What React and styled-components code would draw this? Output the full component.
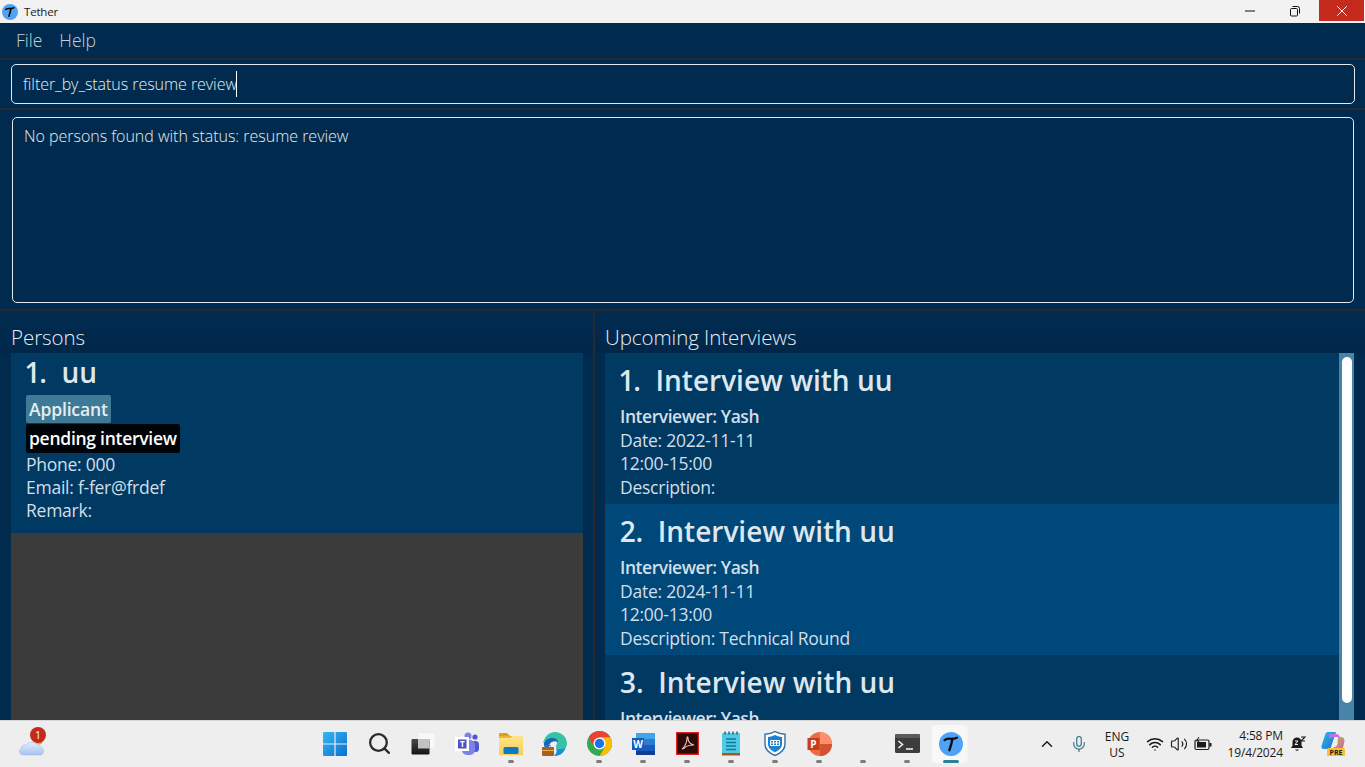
import styled, { createGlobalStyle } from 'styled-components';
import { Minus, X, ChevronUp, Mic, Wifi, Volume2, Search } from 'lucide-react';

const GlobalStyle = createGlobalStyle`
	html, body {
		margin: 0;
		padding: 0;
		background: #002b4e;
	}
	* {
		box-sizing: border-box;
	}
`;

const Window = styled.div`
	width: 1365px;
	height: 767px;
	overflow: hidden;
	display: flex;
	flex-direction: column;
	font-family: 'Open Sans', 'Noto Sans', sans-serif;
	background: #002b4e;
`;

const TitleBar = styled.div`
	height: 23px;
	flex: none;
	background: #f2f2f2;
	display: flex;
	align-items: center;
	padding-left: 2px;
	color: #1a1a1a;
	font-size: 11.5px;
`;

const TitleText = styled.span`
	margin-left: 6px;
	letter-spacing: -0.2px;
`;

const WindowButtons = styled.div`
	margin-left: auto;
	display: flex;
	align-self: flex-start;
	padding-right: 1px;
`;

const WindowButton = styled.div`
	width: 45px;
	height: 21px;
	display: flex;
	align-items: center;
	justify-content: center;
	padding-right: ${(p) => (p.$close ? 0 : 3)}px;
	color: ${(p) => (p.$close ? '#fff' : '#111')};
	background: ${(p) => (p.$close ? '#c42b1c' : 'transparent')};
`;

const MenuBar = styled.div`
	height: 35px;
	flex: none;
	display: flex;
	align-items: center;
	gap: 17px;
	padding: 0 0 2px 16px;
	color: #c4d0da;
	font-size: 17.5px;
	font-weight: 300;
`;

const CommandRow = styled.div`
	height: 52px;
	flex: none;
	border-top: 2px solid #282a2d;
	border-bottom: 2px solid #282a2d;
	padding: 4px 10px 4px 11px;
`;

const CommandBox = styled.div`
	height: 40px;
	border: 1.5px solid #e4e9ed;
	border-radius: 5px;
	display: flex;
	align-items: center;
	padding-left: 11px;
	color: #e8eef3;
	font-size: 16px;
	font-weight: 300;
	letter-spacing: -0.05px;
`;

const Caret = styled.span`
	width: 1px;
	height: 26px;
	background: #fff;
	margin-left: -1px;
`;

const ResultRow = styled.div`
	height: 199px;
	flex: none;
	padding: 7px 11px 5px 12px;
`;

const ResultBox = styled.div`
	height: 186px;
	border: 1.5px solid #e4e9ed;
	border-radius: 5px;
	padding: 7px 11px;
	color: #e8eef3;
	font-size: 16px;
	font-weight: 300;
	letter-spacing: -0.02px;
	line-height: 22px;
`;

const Split = styled.div`
	flex: 1;
	min-height: 0;
	display: flex;
	border-top: 2px solid #282a2d;
`;

const Panel = styled.section`
	display: flex;
	flex-direction: column;
	width: ${(p) => p.$width}px;
	flex: none;
	padding: 13px ${(p) => p.$right}px 0 ${(p) => p.$left}px;
	background: linear-gradient(#002c50, #00274a 41px, #002b4e 43px);
	min-height: 0;
`;

const Divider = styled.div`
	width: 2px;
	flex: none;
	background: #282a2d;
`;

const PanelTitle = styled.div`
	height: 29px;
	flex: none;
	color: #e6eef4;
	font-size: 20.5px;
	font-weight: 300;
	line-height: 27px;
	letter-spacing: -0.05px;
`;

const PersonList = styled.div`
	flex: 1;
	min-height: 0;
	background: #3b3b3b;
`;

const PersonCard = styled.div`
	height: 180px;
	background: #003a63;
	padding: 0 15px;
	color: #d3dfe8;
	font-size: 17.5px;
	line-height: 22.75px;
`;

const Name = styled.div`
	font-size: 28px;
	font-weight: 600;
	color: #dfe7ee;
	white-space: pre;
	line-height: 38px;
	font-variant-numeric: proportional-nums;
`;

const Tags = styled.div`
	display: flex;
	flex-direction: column;
	align-items: flex-start;
	gap: 1px;
	margin: 4px 0 0;
`;

const Tag = styled.span`
	height: ${(p) => (p.$dark ? 29 : 28)}px;
	padding: 0 3px;
	border-radius: 2px;
	font-size: 17.5px;
	font-weight: 600;
	line-height: 28px;
	letter-spacing: ${(p) => (p.$dark ? '-0.27px' : '-0.15px')};
	color: ${(p) => (p.$dark ? '#fff' : '#e6eef3')};
	background: ${(p) => (p.$dark ? '#000307' : '#3e7a95')};
`;

const Field = styled.div`
	letter-spacing: ${(p) => (p.$bold ? '-0.45px' : '-0.25px')};
	font-weight: ${(p) => (p.$bold ? 600 : 400)};
`;

const InterviewArea = styled.div`
	flex: 1;
	min-height: 0;
	display: flex;
`;

const InterviewList = styled.div`
	flex: 1;
	min-width: 0;
	overflow: hidden;
`;

const InterviewCard = styled.div`
	height: 151px;
	padding: 8px 15px 0;
	color: #d3dfe8;
	font-size: 17.5px;
	line-height: 23.5px;
	background: ${(p) => (p.$even ? '#00487a' : '#003a63')};
`;

const InterviewName = styled(Name)`
	margin-bottom: 6px;
`;

const ScrollTrack = styled.div`
	width: 15px;
	flex: none;
	background: #4784a8;
	padding: 4px 2px 0 3px;
`;

const ScrollThumb = styled.div`
	height: 346px;
	background: #fff;
	border-radius: 5px;
`;

const Taskbar = styled.footer`
	height: 47px;
	flex: none;
	background: #eeeeee;
	border-top: 1px solid #d6d6d6;
	display: flex;
	align-items: stretch;
	color: #1b1b1b;
`;

const Weather = styled.div`
	width: 313px;
	flex: none;
	padding-left: 18px;
	display: flex;
	align-items: center;
`;

const WeatherIcon = styled.div`
	position: relative;
	width: 28px;
	height: 28px;
`;

const Badge = styled.span`
	position: absolute;
	top: -3px;
	right: 0;
	width: 16px;
	height: 16px;
	border-radius: 50%;
	background: #c42b1c;
	color: #fff;
	font-size: 10.5px;
	line-height: 16px;
	text-align: center;
`;

const AppGroup = styled.div`
	display: flex;
`;

const AppSlot = styled.div`
	position: relative;
	isolation: isolate;
	width: 44px;
	display: flex;
	align-items: center;
	justify-content: center;
	padding-bottom: 3px;
	margin: 4px 0 2px;

	&::before {
		content: '';
		display: ${(p) => (p.$active ? 'block' : 'none')};
		position: absolute;
		z-index: -1;
		top: 0;
		left: 3px;
		width: 34px;
		height: 38px;
		border-radius: 4px;
		background: #f8f8f8;
		box-shadow: 3px 0 0 -1px #f4f4f4;
	}

	&::after {
		content: '';
		display: ${(p) => (p.$dot ? 'block' : 'none')};
		position: absolute;
		bottom: 2px;
		left: 50%;
		width: ${(p) => (p.$active ? 16 : 6)}px;
		height: 3px;
		margin-left: ${(p) => (p.$active ? -8 : -3)}px;
		border-radius: 2px;
		background: ${(p) => (p.$active ? '#2a8296' : '#7d7d7d')};
	}
`;

const Tray = styled.div`
	margin-left: auto;
	display: flex;
	align-items: center;
	padding-right: 12px;
`;

const TrayIcon = styled.div`
	width: ${(p) => p.$w}px;
	flex: none;
	display: flex;
	align-items: center;
	justify-content: center;
	color: ${(p) => p.$color || '#1b1b1b'};
`;

const Lang = styled.div`
	width: 50px;
	flex: none;
	text-align: center;
	font-size: 12px;
	line-height: 16px;
	padding-top: 1px;
`;

const Clock = styled.div`
	width: 67px;
	flex: none;
	text-align: right;
	font-size: 12px;
	line-height: 17px;
	letter-spacing: -0.15px;
	white-space: nowrap;
`;

const TetherLogo = ({ size }) => (
	<svg width={size} height={size} viewBox='0 0 24 24'>
		<circle cx='12' cy='12' r='12' fill='#4fa3f7' />
		<path d='M5.500 8.200c2-2 4.500-1.600 6.500-1.400 2 .2 4 .1 6-1.200' fill='none' stroke='#0a0a0a' strokeWidth='2.200' strokeLinecap='round' />
		<path d='M13.200 7c-.2 3.500-1.600 7.500-2.800 11.200' fill='none' stroke='#0a0a0a' strokeWidth='2.400' strokeLinecap='round' />
	</svg>
);

const StartIcon = () => (
	<svg width='24' height='24' viewBox='0 0 24 24'>
		<defs>
			<linearGradient id='winGrad' x1='0' y1='0' x2='1' y2='1'>
				<stop offset='0' stopColor='#35b8f3' />
				<stop offset='1' stopColor='#0a6fd0' />
			</linearGradient>
		</defs>
		<path fill='url(#winGrad)' d='M0 1a1 1 0 0 1 1-1h10.400v11.400H0zM12.600 0H23a1 1 0 0 1 1 1v10.400H12.600zM0 12.600h11.400V24H1a1 1 0 0 1-1-1zM12.600 12.600H24V23a1 1 0 0 1-1 1H12.600z' />
	</svg>
);

const TaskViewIcon = () => (
	<svg width='24' height='24' viewBox='0 0 24 24'>
		<defs>
			<linearGradient id='tvDark' x1='0' y1='0' x2='0' y2='1'>
				<stop offset='0' stopColor='#4a4a4a' />
				<stop offset='1' stopColor='#141414' />
			</linearGradient>
		</defs>
		<rect x='7' y='0.500' width='17' height='16' rx='1' fill='#f8f8f8' stroke='#e2e2e2' strokeWidth='0.500' />
		<rect x='0.500' y='7' width='18' height='15.500' rx='1' fill='url(#tvDark)' />
		<rect x='7' y='7' width='11.500' height='9.500' fill='#c2c2c2' />
	</svg>
);

const TeamsIcon = () => (
	<svg width='26' height='26' viewBox='0 0 26 26'>
		<circle cx='14' cy='5' r='3.500' fill='#7b83eb' />
		<circle cx='21' cy='6' r='2.600' fill='#5059c9' />
		<rect x='17' y='10' width='8' height='11' rx='3.500' fill='#5059c9' />
		<rect x='8' y='9' width='13' height='15' rx='5' fill='#7b83eb' />
		<rect x='1' y='6' width='14' height='14' fill='#fff' />
		<rect x='4' y='8.500' width='8.500' height='9' fill='#4b53bc' />
		<text x='8.200' y='16' fontSize='8' fontWeight='700' fill='#fff' textAnchor='middle' fontFamily='Open Sans'>T</text>
	</svg>
);

const ExplorerIcon = () => (
	<svg width='26' height='26' viewBox='0 0 26 26'>
		<defs>
			<linearGradient id='folderGrad' x1='0' y1='0' x2='0' y2='1'>
				<stop offset='0' stopColor='#fde58a' />
				<stop offset='1' stopColor='#f8cf4e' />
			</linearGradient>
		</defs>
		<path d='M1 3a1 1 0 0 1 1-1h7l3 3h-11z' fill='#d9a11e' />
		<path d='M1 5h23a1 1 0 0 1 1 1v17a1 1 0 0 1-1 1H2a1 1 0 0 1-1-1z' fill='#e8b92f' />
		<path d='M1 7h11l3-2h9a1 1 0 0 1 1 1v17a1 1 0 0 1-1 1H2a1 1 0 0 1-1-1z' fill='url(#folderGrad)' />
		<rect x='5.500' y='16' width='15' height='7' rx='1.500' fill='#0f79c9' />
	</svg>
);

const EdgeIcon = () => (
	<svg width='26' height='26' viewBox='0 0 26 26'>
		<path d='M13 1a12 12 0 0 1 12 12c0 3-2.500 5-6 5-3 0-5-1-5-3 0-1 1-1.500 1-3 0-2.500-3-4-6-4-4 0-7 2.500-8 5C2 6 6.500 1 13 1z' fill='#34c3a5' />
		<path d='M2 12c1-2.500 4-5 8-5 3 0 6 1.500 6 4-3-1.500-8-.5-9 4v6c-3-2-5.500-5-5-9z' fill='#1568b8' />
		<path d='M14 15c0 2 2 3 5 3 2 0 4-.7 5-2-1.500 5-5.500 9-11 9l-1-1c3-1 3-4 2-9z' fill='#1a8fd6' />
		<rect x='0' y='16' width='12' height='9' rx='1' fill='#a9601a' />
		<rect x='4' y='14.500' width='4' height='2' fill='none' stroke='#a9601a' strokeWidth='1' />
		<rect x='0' y='19' width='12' height='1' fill='#e7b05a' />
	</svg>
);

const ChromeIcon = () => (
	<svg width='25' height='25' viewBox='0 0 24 24'>
		<circle cx='12' cy='12' r='12' fill='#34a853' />
		<path d='M1.600 6A12 12 0 0 1 22.400 6H12L6.800 15z' fill='#ea4335' />
		<path d='M22.400 6A12 12 0 0 1 12 24l5.200-9L12 6z' fill='#fbbc04' />
		<circle cx='12' cy='12' r='5.800' fill='#fff' />
		<circle cx='12' cy='12' r='4.500' fill='#1a73e8' />
	</svg>
);

const WordIcon = () => (
	<svg width='25' height='24' viewBox='0 0 25 24'>
		<rect x='5' y='1' width='19' height='6' fill='#41a5ee' />
		<rect x='5' y='7' width='19' height='6' fill='#2b7cd3' />
		<rect x='5' y='13' width='19' height='6' fill='#185abd' />
		<rect x='5' y='19' width='19' height='4' fill='#103f91' />
		<rect x='1' y='6' width='12' height='12' fill='#185abd' />
		<text x='7' y='15.500' fontSize='10' fontWeight='700' fill='#fff' textAnchor='middle' fontFamily='Open Sans'>W</text>
	</svg>
);

const AcrobatIcon = () => (
	<svg width='23' height='23' viewBox='0 0 23 23'>
		<rect x='0.500' y='0.500' width='22' height='22' fill='#2b0a0a' stroke='#e2231a' strokeWidth='1.600' />
		<path d='M6 17c3-2 5-7 5-11 0-1.500 1-1.500 1 0 0 4 2 6 6 7-4 0-8 1-10 3.500z' fill='none' stroke='#f3b8b4' strokeWidth='1.100' />
	</svg>
);

const NotepadIcon = () => (
	<svg width='20' height='25' viewBox='0 0 20 25'>
		<rect x='1' y='2' width='18' height='21' rx='1' fill='#4ecbe4' />
		<rect x='1' y='22' width='18' height='2.500' fill='#b5540f' />
		<path d='M4 0.500v3M8 0.500v3M12 0.500v3M16 0.500v3' stroke='#14708a' strokeWidth='1.500' />
		<path d='M5 8h10M5 11.500h10M5 15h10M5 18.500h10' stroke='#0f7b98' strokeWidth='1.700' />
	</svg>
);

const ShieldIcon = () => (
	<svg width='22' height='25' viewBox='0 0 22 25'>
		<path d='M11 0.500c3 1.800 6.500 2.500 10 2.700v10c0 5-4.500 9-10 11.300C5.500 22.200 1 18.200 1 13.200v-10c3.500-.2 7-.9 10-2.700z' fill='#fff' stroke='#2f6ea8' strokeWidth='1.400' />
		<path d='M11 4c2.500 1.300 5 1.800 7 2v7c0 3.500-3 6.500-7 8.300-4-1.800-7-4.800-7-8.300V6c2-.2 4.500-.7 7-2z' fill='#1f7fd0' />
		<path d='M6.500 9.500h9v5h-9zM6.500 12h9M9.500 9.500v5M12.500 9.500v5' fill='none' stroke='#fff' strokeWidth='1' />
	</svg>
);

const PowerPointIcon = () => (
	<svg width='25' height='24' viewBox='0 0 25 24'>
		<circle cx='13' cy='12' r='12' fill='#ed6c47' />
		<path d='M13 0a12 12 0 0 1 12 12H13z' fill='#ff8f6b' />
		<path d='M13 12h12a12 12 0 0 1-12 12z' fill='#d35230' />
		<rect x='0.500' y='6' width='12' height='12' rx='0.500' fill='#c43e1c' />
		<text x='6.500' y='15.500' fontSize='10' fontWeight='700' fill='#fff' textAnchor='middle' fontFamily='Open Sans'>P</text>
	</svg>
);

const TerminalIcon = () => (
	<svg width='25' height='19' viewBox='0 0 25 19'>
		<rect width='25' height='19' rx='1.500' fill='#3c3c3c' />
		<rect width='25' height='4' rx='1.500' fill='#5a5a5a' />
		<path d='M3.500 7l4 3.500-4 3.500' fill='none' stroke='#eee' strokeWidth='1.600' />
		<path d='M11 15h7' stroke='#eee' strokeWidth='1.600' />
	</svg>
);

const CloudIcon = () => (
	<svg width='28' height='28' viewBox='0 0 28 28'>
		<defs>
			<linearGradient id='cloudGrad' x1='0' y1='0' x2='0' y2='1'>
				<stop offset='0' stopColor='#e2edfc' />
				<stop offset='1' stopColor='#a3c3ef' />
			</linearGradient>
		</defs>
		<circle cx='21' cy='11' r='3.500' fill='#f0a13a' />
		<path d='M5 25a3.500 3.500 0 0 1-2-6.400A4.500 4.500 0 0 1 8 15c1.500-2.500 7-4 10-1 2 0 4 1 4.500 3 2 .5 3.500 2.500 3 5-.5 2-2 3-3.500 3z' fill='url(#cloudGrad)' stroke='#9dbcea' strokeWidth='0.600' />
	</svg>
);

const BatteryIcon = () => (
	<svg width='18' height='14' viewBox='0 0 18 14'>
		<rect x='1' y='3' width='14' height='9.500' rx='1.500' fill='none' stroke='#1b1b1b' strokeWidth='1.200' />
		<rect x='3' y='5' width='9' height='5.500' fill='#1b1b1b' />
		<rect x='15.500' y='6' width='2' height='3.500' fill='#1b1b1b' />
		<path d='M5 0L2.500 4h2.500L3.500 7' fill='none' stroke='#1b1b1b' strokeWidth='1' />
	</svg>
);

const BellIcon = () => (
	<svg width='17' height='17' viewBox='0 0 17 17'>
		<path d='M7 1.500a4.500 4.500 0 0 0-4.500 4.500v3.500L1 12h12l-1.500-2.500V6A4.500 4.500 0 0 0 7 1.500z' fill='#1b1b1b' />
		<path d='M5.200 13.500a1.900 1.900 0 0 0 3.600 0z' fill='#1b1b1b' />
		<path d='M5 5h3l-3 3.500h3' fill='none' stroke='#eee' strokeWidth='1' />
		<path d='M11 1h4l-4 4h4' fill='none' stroke='#1b1b1b' strokeWidth='1.100' />
	</svg>
);

const CopilotIcon = () => (
	<svg width='24' height='26' viewBox='0 0 24 26'>
		<defs>
			<linearGradient id='copA' x1='0' y1='0' x2='1' y2='1'>
				<stop offset='0' stopColor='#2fb8e8' />
				<stop offset='1' stopColor='#1f6fd0' />
			</linearGradient>
			<linearGradient id='copB' x1='0' y1='0' x2='1' y2='1'>
				<stop offset='0' stopColor='#9ad04a' />
				<stop offset='1' stopColor='#e84fb4' />
			</linearGradient>
		</defs>
		<path d='M7 1h8l-5 15c-.5 1.500-1.500 2-3 2H3c-2 0-3-1-2.500-3L4 4c.5-2 1.500-3 3-3z' fill='url(#copA)' />
		<path d='M17 6h3c2 0 3.500 1.500 3.500 4l-1.500 7c-.5 2-2 3-4 3h-8l3-4c2 0 3-1 3.500-3z' fill='url(#copB)' />
		<path d='M8 3h7c2 0 3 1 4 3h-7c-2 0-3 1-4 2z' fill='#c76fe0' />
		<rect x='6' y='17' width='18' height='8' rx='1.500' fill='#fbc02d' />
		<text x='15' y='23.500' fontSize='7' fontWeight='700' fill='#222' textAnchor='middle' fontFamily='Open Sans'>PRE</text>
	</svg>
);

const apps = [
	{ id: 'start', icon: <StartIcon /> },
	{ id: 'search', icon: <Search size={25} color='#2a2a2a' strokeWidth={2.2} /> },
	{ id: 'taskview', icon: <TaskViewIcon /> },
	{ id: 'teams', icon: <TeamsIcon /> },
	{ id: 'explorer', icon: <ExplorerIcon />, dot: true },
	{ id: 'edge', icon: <EdgeIcon /> },
	{ id: 'chrome', icon: <ChromeIcon />, dot: true },
	{ id: 'word', icon: <WordIcon />, dot: true },
	{ id: 'acrobat', icon: <AcrobatIcon />, dot: true },
	{ id: 'notepad', icon: <NotepadIcon />, dot: true },
	{ id: 'shield', icon: <ShieldIcon />, dot: true },
	{ id: 'ppt', icon: <PowerPointIcon />, dot: true },
	{ id: 'blank', icon: null, dot: true },
	{ id: 'terminal', icon: <TerminalIcon />, dot: true },
	{ id: 'tether', icon: <TetherLogo size={24} />, dot: true, active: true },
];

const interviews = [
	{ date: '2022-11-11', time: '12:00-15:00', description: '' },
	{ date: '2024-11-11', time: '12:00-13:00', description: ' Technical Round' },
	{ date: '2024-11-11', time: '12:00-13:00', description: '' },
];

const App = () => {
	return (
		<Window>
			<GlobalStyle />
			<TitleBar>
				<TetherLogo size={16} />
				<TitleText>Tether</TitleText>
				<WindowButtons>
					<WindowButton><Minus size={16} strokeWidth={1.5} /></WindowButton>
					<WindowButton>
						<svg width='12' height='12' viewBox='0 0 12 12' fill='none' stroke='currentColor'>
							<rect x='1.500' y='3.500' width='7' height='7.500' rx='1' />
							<path d='M3.500 1.500h5a2 2 0 0 1 2 2v5' />
						</svg>
					</WindowButton>
					<WindowButton $close><X size={18} strokeWidth={1.3} /></WindowButton>
				</WindowButtons>
			</TitleBar>
			<MenuBar>
				<span>File</span>
				<span>Help</span>
			</MenuBar>
			<CommandRow>
				<CommandBox>
					filter_by_status resume review
					<Caret />
				</CommandBox>
			</CommandRow>
			<ResultRow>
				<ResultBox>No persons found with status: resume review</ResultBox>
			</ResultRow>
			<Split>
				<Panel $width={593} $left={11} $right={10}>
					<PanelTitle>Persons</PanelTitle>
					<PersonList>
						<PersonCard>
							<Name>1.  uu</Name>
							<Tags>
								<Tag>Applicant</Tag>
								<Tag $dark>pending interview</Tag>
							</Tags>
							<Field>Phone: 000</Field>
							<Field>Email: f-fer@frdef</Field>
							<Field>Remark:</Field>
						</PersonCard>
					</PersonList>
				</Panel>
				<Divider />
				<Panel $width={770} $left={10} $right={11}>
					<PanelTitle>Upcoming Interviews</PanelTitle>
					<InterviewArea>
						<InterviewList>
							{interviews.map((item, i) => (
								<InterviewCard key={i} $even={i % 2 === 1}>
									<InterviewName>{`${i + 1}.  Interview with uu`}</InterviewName>
									<Field $bold>Interviewer: Yash</Field>
									<Field>Date: {item.date}</Field>
									<Field>{item.time}</Field>
									<Field>Description:{item.description}</Field>
								</InterviewCard>
							))}
						</InterviewList>
						<ScrollTrack>
							<ScrollThumb />
						</ScrollTrack>
					</InterviewArea>
				</Panel>
			</Split>
			<Taskbar>
				<Weather>
					<WeatherIcon>
						<CloudIcon />
						<Badge>1</Badge>
					</WeatherIcon>
				</Weather>
				<AppGroup>
					{apps.map((app) => (
						<AppSlot key={app.id} $dot={app.dot} $active={app.active}>
							{app.icon}
						</AppSlot>
					))}
				</AppGroup>
				<Tray>
					<TrayIcon $w={38}><ChevronUp size={18} /></TrayIcon>
					<TrayIcon $w={26} $color='#2b6f86'><Mic size={18} strokeWidth={1.5} /></TrayIcon>
					<Lang>ENG<br />US</Lang>
					<TrayIcon $w={26}><Wifi size={18} /></TrayIcon>
					<TrayIcon $w={22}><Volume2 size={18} strokeWidth={1.5} /></TrayIcon>
					<TrayIcon $w={26}><BatteryIcon /></TrayIcon>
					<Clock>4:58 PM<br />19/4/2024</Clock>
					<TrayIcon $w={30}><BellIcon /></TrayIcon>
					<TrayIcon $w={40}><CopilotIcon /></TrayIcon>
				</Tray>
			</Taskbar>
		</Window>
	);
};

export default App;
